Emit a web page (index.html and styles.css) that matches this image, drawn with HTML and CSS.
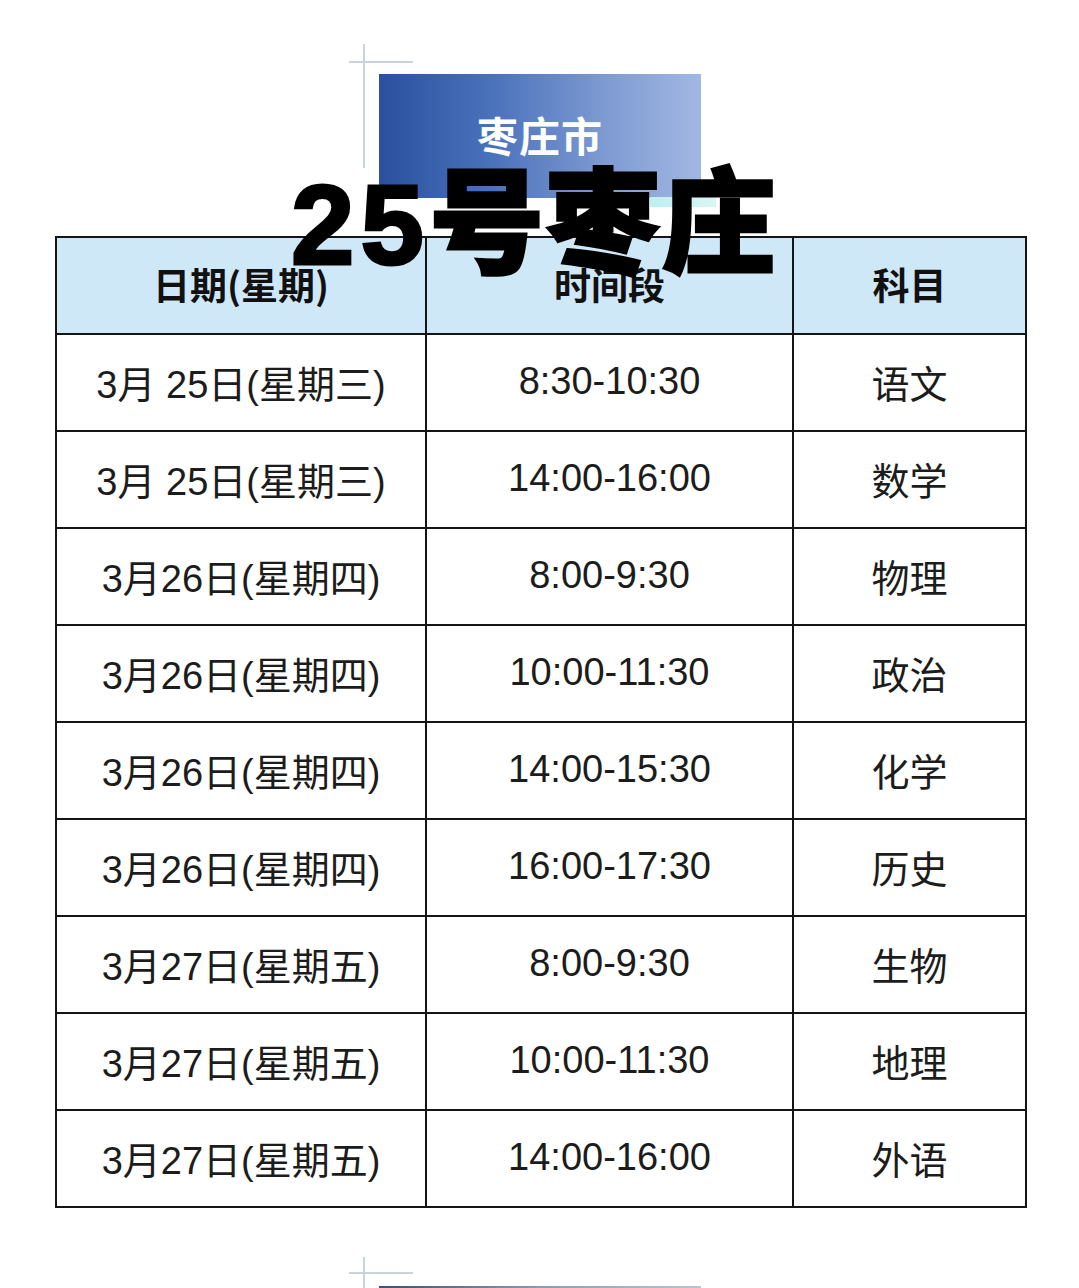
FILE: index.html
```html
<!DOCTYPE html>
<html lang="zh-CN">
<head>
<meta charset="utf-8">
<title>枣庄市 考试时间</title>
<link rel="stylesheet" href="styles.css">
</head>
<body>
<div class="page">
  <header class="top">
    <span class="cross cross-v"></span>
    <span class="cross cross-h"></span>
    <div class="banner">枣庄市</div>
    <span class="glint"></span>
    <h1 class="big-title"><span class="num">25</span>号枣庄</h1>
  </header>

  <table class="schedule">
    <colgroup>
      <col class="c1"><col class="c2"><col class="c3">
    </colgroup>
    <thead>
      <tr><th>日期(星期)</th><th>时间段</th><th>科目</th></tr>
    </thead>
    <tbody>
      <tr><td>3月 25日(星期三)</td><td>8:30-10:30</td><td>语文</td></tr>
      <tr><td>3月 25日(星期三)</td><td>14:00-16:00</td><td>数学</td></tr>
      <tr><td>3月26日(星期四)</td><td>8:00-9:30</td><td>物理</td></tr>
      <tr><td>3月26日(星期四)</td><td>10:00-11:30</td><td>政治</td></tr>
      <tr><td>3月26日(星期四)</td><td>14:00-15:30</td><td>化学</td></tr>
      <tr><td>3月26日(星期四)</td><td>16:00-17:30</td><td>历史</td></tr>
      <tr><td>3月27日(星期五)</td><td>8:00-9:30</td><td>生物</td></tr>
      <tr><td>3月27日(星期五)</td><td>10:00-11:30</td><td>地理</td></tr>
      <tr><td>3月27日(星期五)</td><td>14:00-16:00</td><td>外语</td></tr>
    </tbody>
  </table>

  <footer class="bottom">
    <span class="cross cross-v2"></span>
    <span class="cross cross-h2"></span>
    <div class="bar"></div>
  </footer>
</div>
</body>
</html>
```

FILE: styles.css
```css
html, body {
  margin: 0;
  padding: 0;
  background: #ffffff;
}

.page {
  width: 1079px;
  height: 1288px;
  overflow: hidden;
  position: relative;
  font-family: "Liberation Sans", "Noto Sans CJK SC", sans-serif;
  color: #1a1a1a;
}

.top {
  position: relative;
  height: 236px;
  padding-top: 74px;
  box-sizing: border-box;
}

.cross {
  position: absolute;
  background: #c9d3db;
}
.cross-v { left: 363px; top: 44px; width: 2px; height: 124px; }
.cross-h { left: 349px; top: 61px; width: 64px; height: 2px; }

.banner {
  margin-left: 379px;
  width: 322px;
  height: 124px;
  background: linear-gradient(90deg, #2a509e 0%, #4a72bb 35%, #7d9ad2 70%, #a2b8e3 100%);
  color: #ffffff;
  font-family: "Noto Sans CJK SC", sans-serif;
  font-weight: 700;
  font-size: 41px;
  letter-spacing: 1px;
  padding-bottom: 4px;
  box-sizing: border-box;
  display: flex;
  align-items: center;
  justify-content: center;
}

.glint {
  position: absolute;
  left: 650px;
  top: 197px;
  width: 66px;
  height: 10px;
  background: linear-gradient(90deg, #bfeff0, #d8f6f4);
}

.big-title {
  position: absolute;
  left: 0;
  right: 0;
  top: 140px;
  margin: 0;
  padding-right: 10px;
  text-align: center;
  font-family: "Noto Sans CJK SC", sans-serif;
  font-weight: 900;
  font-size: 114px;
  line-height: 150px;
  color: #000;
  letter-spacing: 2px;
  -webkit-text-stroke: 3px #000;
  z-index: 2;
}
.big-title .num {
  font-family: "Liberation Sans", sans-serif;
  font-weight: 700;
  letter-spacing: 6px;
}

.schedule {
  margin-left: 55px;
  width: 970px;
  border-collapse: collapse;
  table-layout: fixed;
  position: relative;
  z-index: 1;
}
.c1 { width: 370px; }
.c2 { width: 367px; }
.c3 { width: 233px; }

.schedule th,
.schedule td {
  border: 2px solid #151515;
  padding: 0;
  text-align: center;
  vertical-align: middle;
}

.schedule th {
  background: #cfe8f8;
  font-family: "Noto Sans CJK SC", sans-serif;
  font-weight: 700;
  font-size: 37px;
  color: #111;
  padding-bottom: 4px;
  height: 91px;
}

.schedule td {
  background: #ffffff;
  font-size: 38px;
  color: #1c1c1c;
  padding-bottom: 2px;
  height: 93px;
}

.bottom {
  position: absolute;
  left: 0;
  top: 1208px;
  width: 1079px;
  height: 80px;
}
.cross-v2 { left: 363px; top: 49px; width: 2px; height: 40px; }
.cross-h2 { left: 349px; top: 64px; width: 64px; height: 2px; }
.bar {
  position: absolute;
  left: 379px;
  top: 78px;
  width: 322px;
  height: 4px;
  background: linear-gradient(90deg, #3a5274, #8a9cb4, #b9c4d2);
}
```
